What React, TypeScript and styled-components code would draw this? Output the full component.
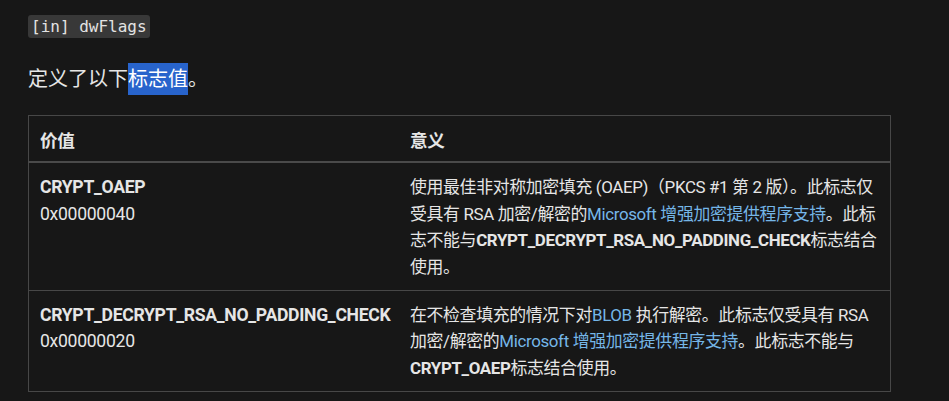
import React from 'react';
import styled, { createGlobalStyle } from 'styled-components';

const GlobalStyle = createGlobalStyle`
	body {
		margin: 0;
		background: #171717;
		color: #e6e6e6;
		font-family: Roboto, "Noto Sans CJK SC", sans-serif;
	}
`;

const Page = styled.div`
	padding: 15px 28px 0;
`;

const Term = styled.div`
	height: 23px;
	display: flex;
	align-items: center;
`;

const Code = styled.code`
	font-family: "DejaVu Sans Mono", monospace;
	font-size: 16px;
	line-height: 23px;
	background: #383838;
	color: #e3e3e3;
	border-radius: 3px;
	padding: 0 3px;
`;

const Para = styled.p`
	margin: 25px 0 0;
	font-size: 20px;
	line-height: 32px;
	height: 32px;
`;

const Selected = styled.span`
	background: #2864cc;
	color: #fff;
	display: inline-block;
	line-height: 32px;
`;

const Table = styled.table`
	margin-top: 20px;
	width: 863px;
	border-collapse: collapse;
	table-layout: fixed;
	border: 1px solid #474747;
	font-size: 17.6px;
	line-height: 26.4px;
	letter-spacing: -0.3px;
`;

const Th = styled.th<{ $w?: number }>`
	text-align: left;
	font-weight: 700;
	padding: 12px 12px 7px 11px;
	border-bottom: 2px solid #4a4a4a;
	width: ${p => (p.$w ? `${p.$w}px` : 'auto')};
`;

const Td = styled.td<{ $desc?: boolean }>`
	vertical-align: top;
	padding: 11px 12px 10px 11px;
	border-top: 1px solid #474747;
	white-space: nowrap;
	font-size: ${p => (p.$desc ? '16.9px' : 'inherit')};
	letter-spacing: ${p => (p.$desc ? '-0.35px' : 'inherit')};
`;

const Link = styled.a`
	color: #75b6e7;
	text-decoration: none;
`;

const Line = styled.div``;

const App: React.FC = () => (
	<>
		<GlobalStyle />
		<Page>
			<Term>
				<Code>[in] dwFlags</Code>
			</Term>
			<Para>
				定义了以下<Selected>标志值</Selected>。
			</Para>
			<Table>
				<thead>
					<tr>
						<Th $w={347}>价值</Th>
						<Th>意义</Th>
					</tr>
				</thead>
				<tbody>
					<tr>
						<Td>
							<Line><b>CRYPT_OAEP</b></Line>
							<Line>0x00000040</Line>
						</Td>
						<Td $desc>
							<Line>使用最佳非对称加密填充 (OAEP)（PKCS #1 第 2 版）。此标志仅</Line>
							<Line>受具有 RSA 加密/解密的<Link>Microsoft 增强加密提供程序支持</Link>。此标</Line>
							<Line>志不能与<b>CRYPT_DECRYPT_RSA_NO_PADDING_CHECK</b>标志结合</Line>
							<Line>使用。</Line>
						</Td>
					</tr>
					<tr>
						<Td>
							<Line><b>CRYPT_DECRYPT_RSA_NO_PADDING_CHECK</b></Line>
							<Line>0x00000020</Line>
						</Td>
						<Td $desc>
							<Line>在不检查填充的情况下对<Link>BLOB</Link> 执行解密。此标志仅受具有 RSA</Line>
							<Line>加密/解密的<Link>Microsoft 增强加密提供程序支持</Link>。此标志不能与</Line>
							<Line><b>CRYPT_OAEP</b>标志结合使用。</Line>
						</Td>
					</tr>
				</tbody>
			</Table>
		</Page>
	</>
);

export default App;
